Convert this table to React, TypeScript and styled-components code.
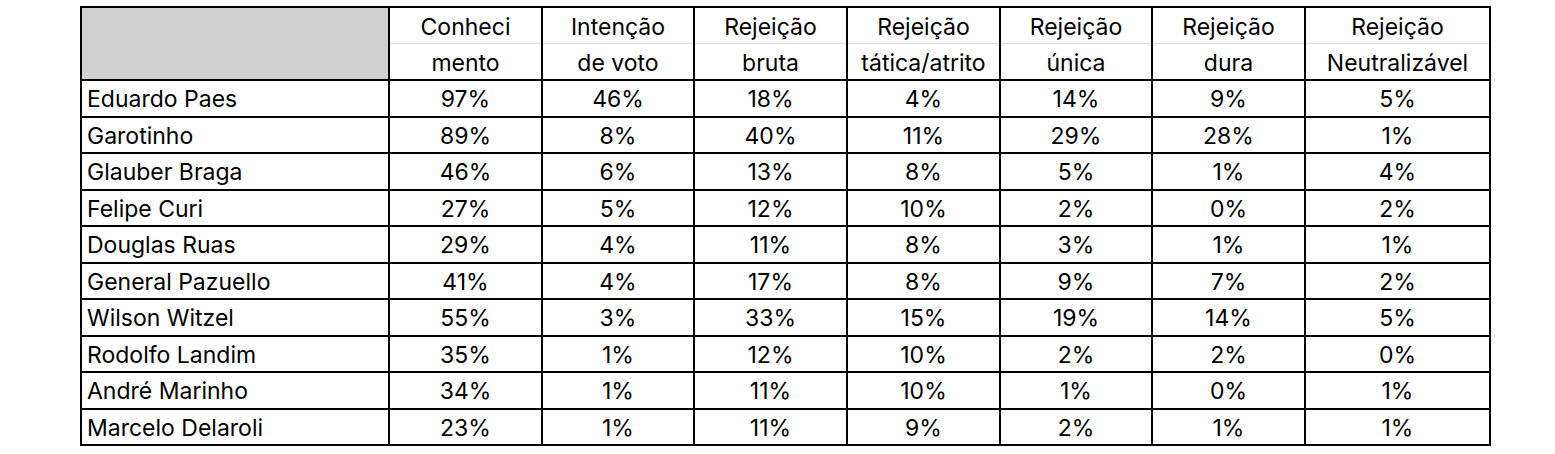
import { createGlobalStyle } from "styled-components";
import styled from "styled-components";

const GlobalStyle = createGlobalStyle`
  body {
    margin: 0;
    background: #ffffff;
    font-family: Inter, "Liberation Sans", Arial, sans-serif;
  }
`;

const headers: [string, string][] = [
  ["Conheci", "mento"],
  ["Intenção", "de voto"],
  ["Rejeição", "bruta"],
  ["Rejeição", "tática/atrito"],
  ["Rejeição", "única"],
  ["Rejeição", "dura"],
  ["Rejeição", "Neutralizável"],
];

const rows: [string, string[]][] = [
  ["Eduardo Paes", ["97%", "46%", "18%", "4%", "14%", "9%", "5%"]],
  ["Garotinho", ["89%", "8%", "40%", "11%", "29%", "28%", "1%"]],
  ["Glauber Braga", ["46%", "6%", "13%", "8%", "5%", "1%", "4%"]],
  ["Felipe Curi", ["27%", "5%", "12%", "10%", "2%", "0%", "2%"]],
  ["Douglas Ruas", ["29%", "4%", "11%", "8%", "3%", "1%", "1%"]],
  ["General Pazuello", ["41%", "4%", "17%", "8%", "9%", "7%", "2%"]],
  ["Wilson Witzel", ["55%", "3%", "33%", "15%", "19%", "14%", "5%"]],
  ["Rodolfo Landim", ["35%", "1%", "12%", "10%", "2%", "2%", "0%"]],
  ["André Marinho", ["34%", "1%", "11%", "10%", "1%", "0%", "1%"]],
  ["Marcelo Delaroli", ["23%", "1%", "11%", "9%", "2%", "1%", "1%"]],
];

const colWidths = [308, 153, 152, 153, 153, 152, 153, 185];

function App() {
  return (
    <Page>
      <GlobalStyle />
      <Sheet>
        <colgroup>
          {colWidths.map((w, i) => (
            <col key={i} style={{ width: w }} />
          ))}
        </colgroup>
        <thead>
          <HeadRow>
            <Corner rowSpan={2} />
            {headers.map((h) => (
              <HeadCell key={h[0] + h[1]} $top>
                {h[0]}
              </HeadCell>
            ))}
          </HeadRow>
          <HeadRow>
            {headers.map((h) => (
              <HeadCell key={h[1]}>{h[1]}</HeadCell>
            ))}
          </HeadRow>
        </thead>
        <tbody>
          {rows.map(([name, vals]) => (
            <DataRow key={name}>
              <NameCell>{name}</NameCell>
              {vals.map((v, i) => (
                <ValueCell key={i}>{v}</ValueCell>
              ))}
            </DataRow>
          ))}
        </tbody>
      </Sheet>
    </Page>
  );
}

const Page = styled.div`
  padding: 6px 0 0 80px;
`;

const Sheet = styled.table`
  border-collapse: collapse;
  table-layout: fixed;
  width: 1411px;
  border: 2px solid #000;
  color: #000;
  font-size: 23px;
  line-height: 1;
`;

const HeadRow = styled.tr`
  height: 36.5px;
`;

const Corner = styled.th`
  background: #d0d0d0;
  border: 2px solid #000;
`;

const HeadCell = styled.th<{ $top?: boolean }>`
  font-weight: 400;
  text-align: center;
  padding: 3px 0 0;
  border-left: 2px solid #000;
  border-right: 2px solid #000;
  border-bottom: ${(p) => (p.$top ? "1px solid #e0e0e0" : "2px solid #000")};
  white-space: nowrap;
`;

const DataRow = styled.tr`
  height: 36.5px;
`;

const NameCell = styled.td`
  padding: 3px 0 0 5px;
  text-align: left;
  border: 2px solid #000;
  white-space: nowrap;
`;

const ValueCell = styled.td`
  padding: 3px 0 0;
  text-align: center;
  border: 2px solid #000;
`;

export default App;
